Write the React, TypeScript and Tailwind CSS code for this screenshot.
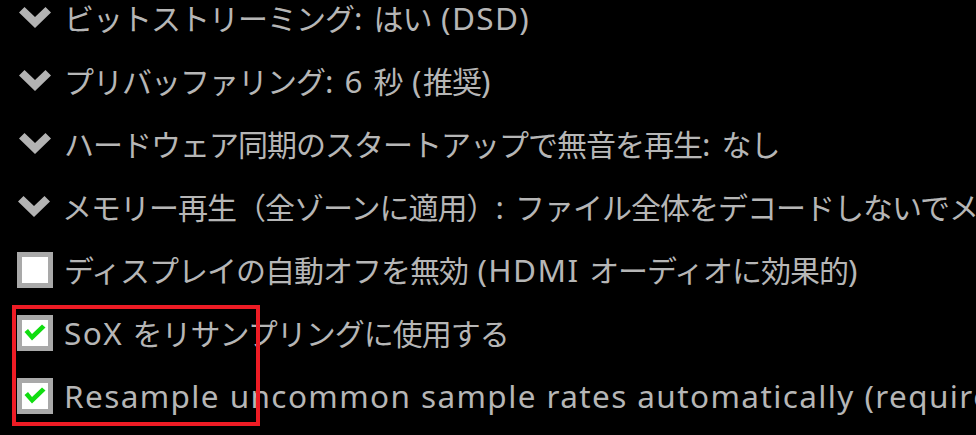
import React from "react";

type Row = { kind: "chevron" | "off" | "on"; label: string };

const rows: Row[] = [
  { kind: "chevron", label: "ビットストリーミング: はい (DSD)" },
  { kind: "chevron", label: "プリバッファリング: 6 秒 (推奨)" },
  { kind: "chevron", label: "ハードウェア同期のスタートアップで無音を再生: なし" },
  { kind: "chevron", label: "メモリー再生（全ゾーンに適用）: ファイル全体をデコードしないでメモリーに読み込む" },
  { kind: "off", label: "ディスプレイの自動オフを無効 (HDMI オーディオに効果的)" },
  { kind: "on", label: "SoX をリサンプリングに使用する" },
  { kind: "on", label: "Resample uncommon sample rates automatically (requires SoX)" },
];

const cjk = /[\u3000-\u9fff\uff00-\uffef]/;

// split a label into latin / japanese runs so each can get its own metrics
function runs(text: string) {
  const out: { jp: boolean; s: string }[] = [];
  for (const ch of text) {
    const jp = cjk.test(ch);
    const last = out[out.length - 1];
    if (last && last.jp === jp) last.s += ch;
    else out.push({ jp, s: ch });
  }
  return out;
}

function Chevron() {
  return (
    <svg width="34" height="24" viewBox="0 0 34 24" className="shrink-0">
      <path d="M1 6.5 L6.5 1 L17 11 L27.5 1 L33 6.5 L17 22 Z" fill="#b3b3b3" />
    </svg>
  );
}

function Box({ checked }: { checked: boolean }) {
  return (
    <div className="w-[36px] h-[36px] shrink-0 bg-white border-[5px] border-[#a9a9a9] flex items-center justify-center">
      {checked && (
        <svg width="22" height="18" viewBox="0 0 22 18">
          <path d="M0.5 8 L4 5 L8 10 L18 0.5 L21.5 3.5 L8 16.5 Z" fill="#11dd11" />
        </svg>
      )}
    </div>
  );
}

function Label({ text }: { text: string }) {
  return (
    <span className="text-[#b6b6b6] leading-none">
      {runs(text).map((r, i) =>
        r.jp ? (
          <span key={i} className="text-[30px] tracking-[-1px]" style={{ fontFamily: '"Noto Sans CJK JP", sans-serif' }}>
            {r.s}
          </span>
        ) : (
          <span key={i} className="text-[31.5px] tracking-[1.4px]" style={{ fontFamily: '"Noto Sans", sans-serif' }}>
            {r.s}
          </span>
        )
      )}
    </span>
  );
}

export default function App() {
  return (
    <div className="relative w-[976px] h-[435px] overflow-hidden bg-black">
      <div className="-mt-[14px] flex flex-col">
        {rows.map((r, i) => (
          <div key={i} className="h-[63px] flex items-center pl-[17px] gap-[11px] whitespace-nowrap">
            <div className="w-[36px] flex justify-center">
              {r.kind === "chevron" ? <Chevron /> : <Box checked={r.kind === "on"} />}
            </div>
            <Label text={r.label} />
          </div>
        ))}
      </div>
      {/* highlight around the SoX options */}
      <div className="absolute left-[12px] top-[305px] w-[248px] h-[121px] border-[4px] border-[#ee1c25]" />
    </div>
  );
}
